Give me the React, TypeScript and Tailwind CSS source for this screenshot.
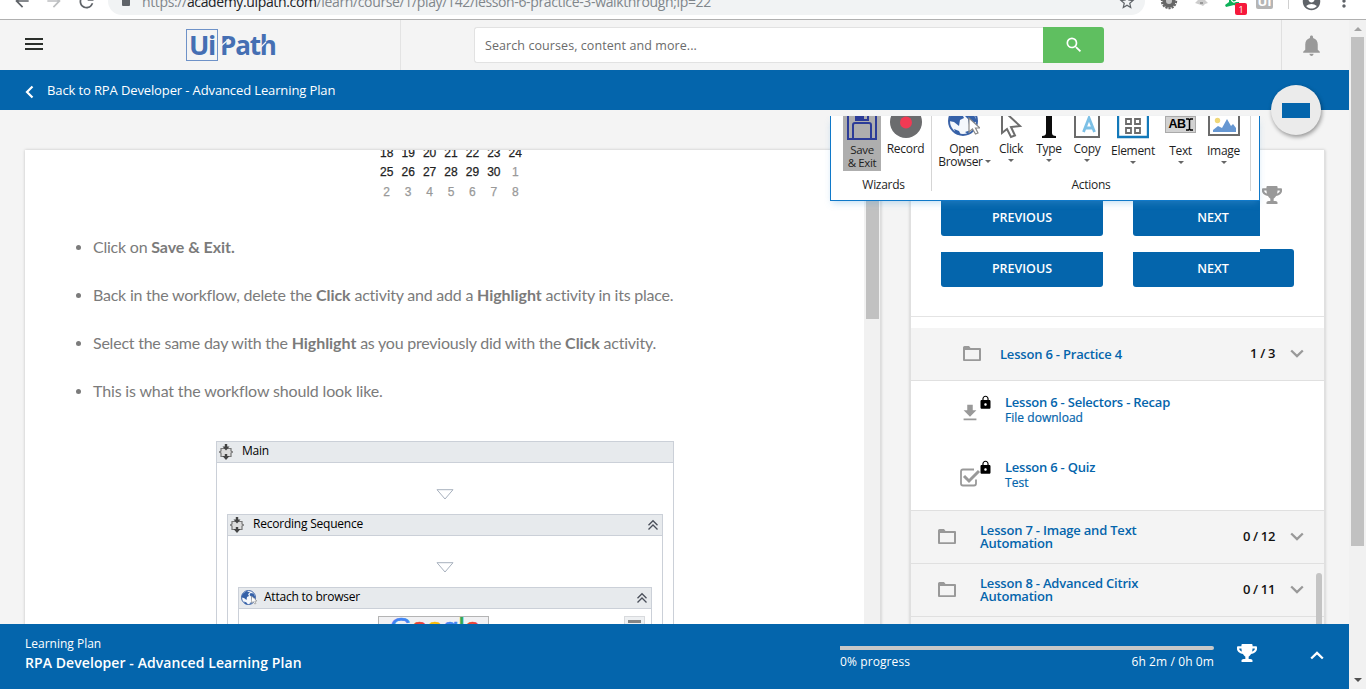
import type { ReactNode } from "react";
import {
  MdArrowBack,
  MdArrowForward,
  MdRefresh,
  MdStarBorder,
  MdAccountCircle,
  MdMoreVert,
  MdNotifications,
  MdSearch,
  MdLock,
  MdFileDownload,
} from "react-icons/md";
import { FaTrophy } from "react-icons/fa";

function BrowserBar() {
  return (
    <div className="h-[20px] shrink-0 overflow-hidden border-b border-[#b0b0b0] bg-white">
      <div className="-mt-[13px] flex h-[28px] items-center">
        <MdArrowBack className="ml-[12px] size-[20px] shrink-0 text-[#5f6368]" />
        <MdArrowForward className="ml-[12px] size-[20px] shrink-0 text-[#bdbfc1]" />
        <MdRefresh className="ml-[12px] size-[21px] shrink-0 text-[#5f6368]" />
        <div className="ml-[11px] flex h-[28px] w-[1037px] shrink-0 items-center rounded-full bg-[#f1f3f4] pl-[14px]">
          <span className="h-[10px] w-[8px] rounded-[1px] bg-[#5f6368]" />
          <span className="mt-[2px] ml-[12px] w-[970px] whitespace-nowrap font-['Open_Sans',sans-serif] text-[14px] leading-[20px] tracking-[-0.36px] text-[#80868b]">
            https://<span className="text-[#202124]">academy.uipath.com</span>
            /learn/course/1/play/142/lesson-6-practice-3-walkthrough;lp=22
          </span>
          <MdStarBorder className="mt-[1px] ml-[6px] size-[18px] shrink-0 text-[#5f6368]" />
        </div>
        <svg viewBox="0 0 18 18" className="ml-[15px] size-[18px] shrink-0">
          <circle cx="9" cy="9" r="7.200" fill="none" stroke="#666" strokeWidth="2" strokeDasharray="2.200 1" />
          <circle cx="9" cy="9" r="4.800" fill="#c4c4c4" stroke="#666" strokeWidth="3.600" />
        </svg>
        <svg viewBox="0 0 13 12" className="ml-[17px] h-[12px] w-[13px] shrink-0">
          <path d="M3 0h7v5l3 3-3 1-2 2-2-1-3-1-3-1 3-3z" fill="#cdcdcd" />
          <path d="M5 7h3v2H5z" fill="#999" />
        </svg>
        <div className="relative ml-[17px] h-[12px] w-[14px] shrink-0">
          <svg viewBox="0 0 14 12" className="size-full">
            <path d="M4 0h7v7h3v5l-5-2-8 2-1-2 4-3z" fill="#0fb15a" />
            <path d="M6 4q2 5 5 2" fill="none" stroke="#fff" strokeWidth="1.200" />
          </svg>
          <span className="absolute top-[8px] left-[10px] flex h-[12px] w-[12px] items-center justify-center rounded-[2px] bg-[#f6193c] font-['Open_Sans',sans-serif] text-[9px] leading-none text-white">
            1
          </span>
        </div>
        <span className="ml-[17px] flex h-[16px] w-[17px] shrink-0 items-center justify-center rounded-[2px] bg-[#b5b5b5] font-['Open_Sans',sans-serif] text-[13px] leading-none font-bold text-white">
          UI
        </span>
        <span className="ml-[15px] h-[16px] w-px shrink-0 bg-[#d0d0d0]" />
        <MdAccountCircle className="ml-[12px] size-[21px] shrink-0 text-[#5f6368]" />
        <MdMoreVert className="ml-[12px] size-[20px] shrink-0 text-[#5f6368]" />
      </div>
    </div>
  );
}

function Logo() {
  return (
    <div className="ml-[143px] flex h-[32px] items-center font-['Open_Sans',sans-serif] text-[26px] leading-none font-bold text-[#456fb3]">
      <span className="flex h-[32px] w-[32px] items-center justify-center border border-[#6e92c8] pb-[1px] text-[27px] tracking-[-1.2px]">
        Ui
      </span>
      <span className="relative ml-[2px] pb-[1px] tracking-[-1.2px]">
        Path
        <svg viewBox="0 0 56 32" className="absolute top-[-3px] left-0 h-[32px] w-[56px]">
          <path d="M1 17l8-7M40 19l6-6" stroke="#f4f4f4" strokeWidth="1.200" fill="none" />
        </svg>
      </span>
    </div>
  );
}

function Header() {
  return (
    <header className="flex h-[50px] shrink-0 bg-[#f4f4f4]">
      <div className="flex w-[401px] items-center border-r border-[#e3e3e3] pl-[25px]">
        <div className="mt-[-2px] flex h-[12px] w-[18px] flex-col justify-between">
          <span className="h-[2px] bg-[#2b2f2b]" />
          <span className="h-[2px] bg-[#2b2f2b]" />
          <span className="h-[2px] bg-[#2b2f2b]" />
        </div>
        <Logo />
      </div>
      <div className="flex flex-1 items-start pt-[7px] pl-[73px]">
        <div className="flex h-[36px] w-[569px] items-center rounded-l-[3px] border border-r-0 border-[#e2e2e2] bg-white pt-[2px] pl-[10px] font-['Open_Sans',sans-serif] text-[12.5px] tracking-[0.08px] text-[#6b6b6b]">
          Search courses, content and more...
        </div>
        <button className="flex h-[36px] w-[61px] items-center justify-center rounded-r-[3px] bg-[#5fbf60] text-white">
          <MdSearch className="mt-[-1px] size-[20px]" />
        </button>
      </div>
      <div className="flex w-[68px] items-center justify-center border-l border-[#e0e0e0] pr-[8px]">
        <MdNotifications className="size-[25px] text-[#999]" />
      </div>
    </header>
  );
}

function Caret() {
  return <span className="inline-block border-x-[3px] border-t-[3px] border-x-transparent border-t-[#666]" />;
}

function Tool({ label, icon, className, low }: { label: string; icon: ReactNode; className: string; low?: boolean }) {
  return (
    <div className={"flex shrink-0 flex-col items-center " + className}>
      <div className="flex h-[24px] items-start">{icon}</div>
      <span className={low ? "mt-[4px]" : "mt-[2px]"}>{label}</span>
      <span className="mt-[4px] flex">
        <Caret />
      </span>
    </div>
  );
}

function Globe({ className }: { className: string }) {
  return (
    <svg viewBox="0 0 32 32" className={className}>
      <circle cx="15" cy="15" r="14" fill="#f5f8fc" stroke="#3d64a8" strokeWidth="2" />
      <path d="M3 8l8-6 7 3-4 3 2 4-4 2-1 6-5-4-5-1zM19 6l6 1 4 8-3 2-1 5-4-3-1-6-3-3zM6 23l5 2 2 4-5-1zM17 26l6-2-3 4z" fill="#3561a8" />
      <path d="M21 12v14l3.500-3 3 5 2.500-1-2.500-5h4.500z" fill="#fff" stroke="#888" strokeWidth="1.200" />
    </svg>
  );
}

function Ribbon() {
  return (
    <div className="absolute top-[116px] left-[830px] z-10 flex h-[85px] w-[430px] flex-col border-x border-b border-[#1079c9] bg-white font-['Open_Sans',sans-serif] text-[12px] leading-[13px] text-[#1e1e1e] shadow-[0_4px_7px_-2px_rgba(80,160,220,0.35)]">
      <div className="flex h-[75px]">
        <div className="flex w-[101px] flex-col border-r border-[#d5d5d5]">
          <div className="flex h-[55px]">
            <div className="ml-[12px] flex w-[38px] shrink-0 flex-col items-center bg-[#aeaeae] text-[11.5px] tracking-[-0.35px]">
              <svg viewBox="0 0 30 24" className="h-[24px] w-[30px] shrink-0">
                <path d="M1 0v23h28V0M6 23V9q0-2 2-2h14q2 0 2 2v14" fill="none" stroke="#2c3c98" strokeWidth="2" />
                <path d="M8 0h14v5H8z" fill="#2c3c98" />
                <path d="M17 0h3v3h-3z" fill="#aeaeae" />
              </svg>
              <span className="mt-[3px]">Save</span>
              <span>&amp; Exit</span>
            </div>
            <div className="flex flex-1 flex-col items-center pr-px">
              <svg viewBox="0 0 32 24" className="h-[24px] w-[32px]">
                <circle cx="16" cy="6" r="16" fill="#6b6c6e" />
                <circle cx="16" cy="6.500" r="6" fill="#f13a54" />
              </svg>
              <span className="mt-[2px] tracking-[-0.3px]">Record</span>
            </div>
          </div>
          <div className="mt-[7px] pl-[5px] text-center tracking-[-0.3px]">Wizards</div>
        </div>
        <div className="flex w-[319px] flex-col border-r border-[#d5d5d5] tracking-[-0.3px]">
          <div className="flex h-[55px]">
            <div className="ml-[5px] flex w-[54px] shrink-0 flex-col items-center">
              <div className="h-[24px] overflow-hidden">
                <Globe className="mt-[-10px] size-[32px]" />
              </div>
              <span className="mt-[2px]">Open</span>
              <span className="flex items-center gap-[2px] pl-px whitespace-nowrap">
                Browser
                <Caret />
              </span>
            </div>
            <Tool
              className="w-[40px]"
              label="Click"
              icon={
                <svg viewBox="0 0 24 24" className="h-[24px] w-[24px]">
                  <path d="M3-5v22l5-4 4 8 4-1.500-4-8.500 9-1L7-3" fill="#fff" stroke="#6d6d6d" strokeWidth="2" />
                </svg>
              }
            />
            <Tool
              className="w-[36px]"
              label="Type"
              icon={
                <svg viewBox="0 0 16 24" className="h-[24px] w-[16px]">
                  <path d="M5 0h6v17q0 3 4 3v2H1v-2q4 0 4-3z" fill="#0c0c0c" />
                </svg>
              }
            />
            <Tool
              className="w-[40px]"
              label="Copy"
              icon={
                <svg viewBox="0 0 26 24" className="h-[24px] w-[26px]">
                  <path d="M1 0v21h24V0" fill="#fff" stroke="#6b6b6b" strokeWidth="2" />
                  <path d="M9.500 16L15 2l5.500 14M11 12h8" fill="none" stroke="#7cc0e6" strokeWidth="2.800" />
                </svg>
              }
            />
            <Tool
              className="w-[52px]"
              low
              label="Element"
              icon={
                <svg viewBox="0 0 32 24" className="h-[24px] w-[32px]">
                  <path d="M1 0v21h30V0" fill="#fff" stroke="#1278b9" strokeWidth="2.400" />
                  <path d="M9 3h5v5H9zM18 3h5v5h-5zM9 12h5v5H9zM18 12h5v5h-5z" fill="none" stroke="#6b6b6b" strokeWidth="1.800" />
                </svg>
              }
            />
            <Tool
              className="w-[43px]"
              low
              label="Text"
              icon={
                <span className="flex h-[17px] w-[31px] items-center justify-center border border-[#aaa] bg-[#d2d2d2] font-['Liberation_Sans',sans-serif] text-[12.5px] font-bold tracking-[-0.5px] text-black">
                  AB
                  <svg viewBox="0 0 7 13" className="h-[13px] w-[7px]">
                    <path d="M0 1h2.500L3.500 2l1-1H7M3.500 2v9M0 12h2.500l1-1 1 1H7" fill="none" stroke="#000" strokeWidth="1.500" />
                  </svg>
                </span>
              }
            />
            <Tool
              className="w-[43px]"
              low
              label="Image"
              icon={
                <svg viewBox="0 0 32 24" className="h-[24px] w-[32px]">
                  <path d="M1 0v19h30V0" fill="#fff" stroke="#6b6b6b" strokeWidth="2" />
                  <circle cx="9.500" cy="4.500" r="2.700" fill="#f0d878" />
                  <path d="M5 16v-2l5-4 4 2 5-9 4 7 2-2 3 4v4z" fill="#6697d2" />
                </svg>
              }
            />
          </div>
          <div className="mt-[7px] text-center tracking-[-0.3px]">Actions</div>
        </div>
      </div>
    </div>
  );
}

function SequenceIcon() {
  return (
    <svg viewBox="0 0 14 16" className="h-[16px] w-[14px] shrink-0">
      <path d="M4 4.500H2v2.500L0.500 8 2 9v3.500h10V9l1.500-1L12 7V4.500z" fill="#dcdcdc" stroke="#777" strokeWidth="1.200" />
      <path d="M7 0v4M7 10v3" stroke="#444" strokeWidth="2.400" />
      <path d="M3.500 2.500h7L7 6.500zM3.500 12h7L7 16z" fill="#444" />
    </svg>
  );
}

function FlowHeader({ title, icon, collapsible }: { title: string; icon: ReactNode; collapsible?: boolean }) {
  return (
    <div className="flex h-[21px] items-center border-b border-[#cbd0d8] bg-[#e7eaed] pr-[3px] pl-[2px] font-['Open_Sans',sans-serif] text-[12px] leading-none tracking-[-0.22px] text-black">
      <span className="flex w-[23px]">{icon}</span>
      <span className="flex-1 pb-[2px]">{title}</span>
      {collapsible && (
        <svg viewBox="0 0 12 12" className="h-[12px] w-[12px]">
          <path d="M1.500 6.200L6 1.700l4.500 4.500M1.500 10.500L6 6l4.500 4.500" fill="none" stroke="#4a4f5a" strokeWidth="1.300" />
        </svg>
      )}
    </div>
  );
}

function FlowArrow() {
  return (
    <div className="flex h-[51px] justify-center pt-[26px]">
      <svg viewBox="0 0 18 11" className="h-[11px] w-[18px]">
        <path d="M1 .7h16L9 10z" fill="#fff" stroke="#a7b0bd" strokeWidth="1" />
      </svg>
    </div>
  );
}

function Workflow() {
  return (
    <div className="mt-[26px] ml-[191px] h-[300px] w-[458px] shrink-0 border border-[#cbd0d8]">
      <FlowHeader title="Main" icon={<SequenceIcon />} />
      <FlowArrow />
      <div className="mx-[10px] h-[300px] border border-[#cbd0d8]">
        <FlowHeader title="Recording Sequence" icon={<SequenceIcon />} collapsible />
        <FlowArrow />
        <div className="mx-[10px] h-[200px] border border-[#cbd0d8]">
          <FlowHeader title="Attach to browser" icon={<Globe className="size-[16px]" />} collapsible />
          <div className="flex pt-[7px] pl-[139px]">
            <div className="h-[40px] w-[111px] overflow-hidden border border-[#b4b4b4] bg-[#f1f1f3] pl-[11px] font-['Liberation_Sans',sans-serif] text-[28px] leading-[30px] [-webkit-text-stroke:0.6px]">
              <div className="mt-[-4px]">
                <span className="text-[#4285f4]">G</span>
                <span className="text-[#ea4335]">o</span>
                <span className="text-[#fbbc05]">o</span>
                <span className="text-[#4285f4]">g</span>
                <span className="text-[#34a853]">l</span>
                <span className="text-[#ea4335]">e</span>
              </div>
            </div>
            <div className="ml-[135px] h-[20px] w-[21px] border border-[#d8dadd] bg-[#eef0f2] px-[3px] pt-[3px]">
              <div className="h-[3px] bg-[#858585]" />
            </div>
          </div>
        </div>
      </div>
    </div>
  );
}

const week1 = ["18", "19", "20", "21", "22", "23", "24"];
const week2 = ["25", "26", "27", "28", "29", "30"];
const week3 = ["2", "3", "4", "5", "6", "7", "8"];

function Week({ children }: { children: ReactNode }) {
  return <div className="grid h-[19.5px] grid-cols-7 place-items-center">{children}</div>;
}

function Calendar() {
  return (
    <div className="mt-[-7px] ml-[351px] h-[59px] w-[150px] shrink-0 font-['Liberation_Sans',sans-serif] text-[12px] leading-none text-[#222] [-webkit-text-stroke:0.25px]">
      <Week>{week1.map((d) => <span key={d}>{d}</span>)}</Week>
      <Week>
        {week2.map((d) => <span key={d}>{d}</span>)}
        <span className="text-[#999]">1</span>
      </Week>
      <Week>{week3.map((d) => <span key={d} className="text-[#999]">{d}</span>)}</Week>
    </div>
  );
}

function Bullet({ children }: { children: ReactNode }) {
  return (
    <li className="flex h-[48px] items-center whitespace-nowrap">
      <span className="mt-px mr-[12px] ml-px size-[5px] rounded-full bg-[#7b7b7b]" />
      <span>{children}</span>
    </li>
  );
}

function Strong({ children }: { children: ReactNode }) {
  return <b className="tracking-[-0.05px]">{children}</b>;
}

function Lesson() {
  return (
    <section className="flex h-[480px] w-[856px] bg-white shadow-[0_0_3px_rgba(0,0,0,0.2)]">
      <div className="flex h-full flex-1 flex-col overflow-hidden">
        <Calendar />
        <ul className="mt-[21px] ml-[50px] shrink-0 font-['Lato',sans-serif] text-[16px] tracking-[-0.23px] text-[#7b7b7b]">
          <Bullet>
            Click on <Strong>Save &amp; Exit.</Strong>
          </Bullet>
          <Bullet>
            Back in the workflow, delete the <Strong>Click</Strong> activity and add a <Strong>Highlight</Strong> activity in its place.
          </Bullet>
          <Bullet>
            Select the same day with the <Strong>Highlight</Strong> as you previously did with the <Strong>Click</Strong> activity.
          </Bullet>
          <Bullet>
            <span className="tracking-[-0.15px]">This is what the workflow should look like.</span>
          </Bullet>
        </ul>
        <Workflow />
      </div>
      <div className="w-[17px] border-r border-[#ddd] bg-[#f1f1f1] pr-px pl-[2px]">
        <div className="h-[169px] bg-[#c1c1c1]" />
      </div>
    </section>
  );
}

function Folder() {
  return (
    <svg viewBox="0 0 18 15" className="mt-[-1px] h-[15px] w-[18px] shrink-0">
      <path d="M0 1.500Q0 0 1.500 0H6l1.500 2H17q1 0 1 1v11q0 1-1 1H1q-1 0-1-1zM2 4v9.200h14V4z" fill="#999" fillRule="evenodd" />
    </svg>
  );
}

function Chevron({ up, className }: { up?: boolean; className: string }) {
  return (
    <svg viewBox="0 0 14 9" className={"h-[9px] w-[14px] shrink-0 " + className}>
      <path d={up ? "M1.200 7.500L7 1.900l5.800 5.600" : "M1.200 1.500L7 7.100l5.800-5.600"} fill="none" stroke="currentColor" strokeWidth="2.300" />
    </svg>
  );
}

function FolderRow({ title, count, nested }: { title: ReactNode; count: string; nested?: boolean }) {
  return (
    <div
      className={
        "flex h-[53px] shrink-0 items-center border-b border-[#e0e0e0] bg-[#f4f4f4] " +
        (nested ? "pl-[52px]" : "pl-[27px]")
      }
    >
      <Folder />
      <span
        className={
          "flex-1 leading-[13px] font-semibold tracking-[-0.2px] text-[#0465ac] " + (nested ? "ml-[19px]" : "ml-[24px]")
        }
      >
        {title}
      </span>
      <span className="font-semibold tracking-[-0.35px] text-[#111]">{count}</span>
      <Chevron className="mt-[-1px] mr-[20px] ml-[15px] text-[#999]" />
    </div>
  );
}

function ItemRow({ title, kind, icon }: { title: string; kind: string; icon: ReactNode }) {
  return (
    <div className="flex h-[65px] shrink-0 pt-[13px] pl-[48px] text-[#0465ac]">
      <div className="relative mt-[7px] size-[24px]">
        {icon}
        <MdLock className="absolute top-[-6px] left-[18.5px] size-[15px] text-black" />
      </div>
      <div className="ml-[22px]">
        <div className="leading-[17px] font-semibold tracking-[-0.22px]">{title}</div>
        <div className="text-[12px] leading-[14px] font-medium tracking-[0.03px] [-webkit-text-stroke:0.2px]">{kind}</div>
      </div>
    </div>
  );
}

function Button({ children, className }: { children: ReactNode; className: string }) {
  return (
    <button className={"flex h-[35px] items-center justify-center bg-[#0465ac] text-[12.5px] font-semibold text-white " + className}>
      {children}
    </button>
  );
}

function Sidebar() {
  return (
    <aside className="relative ml-[29px] flex h-[480px] w-[415px] flex-col overflow-hidden border-x border-[#e0e0e0] bg-white font-['Open_Sans',sans-serif] text-[13px] shadow-[0_0_3px_rgba(0,0,0,0.2)]">
      <div className="flex h-[51px] shrink-0 justify-end pt-[35px] pr-[42px]">
        <FaTrophy className="size-[20px] text-[#999]" />
      </div>
      <div className="flex pl-[30px]">
        <Button className="w-[162px] rounded-b-[3px]">PREVIOUS</Button>
        <Button className="ml-[30px] w-[127px] rounded-bl-[3px] pl-[33px]">NEXT</Button>
      </div>
      <div className="mt-[13px] flex items-end border-b border-[#e4e4e4] pb-[29px] pl-[30px]">
        <Button className="w-[162px] rounded-b-[3px]">PREVIOUS</Button>
        <Button className="ml-[30px] w-[127px] rounded-bl-[3px] pl-[33px]">NEXT</Button>
        <span className="h-[38px] w-[34px] rounded-r-[3px] bg-[#0465ac]" />
      </div>
      <div className="h-[11px] shrink-0" />
      <FolderRow title="Lesson 6 - Practice 4" count="1 / 3" nested />
      <ItemRow
        title="Lesson 6 - Selectors - Recap"
        kind="File download"
        icon={<MdFileDownload className="mt-[1px] size-[22px] text-[#999]" />}
      />
      <ItemRow
        title="Lesson 6 - Quiz"
        kind="Test"
        icon={
          <svg viewBox="0 0 22 20" className="mt-[2px] h-[20px] w-[22px]">
            <path d="M15 1.500H4Q2 1.500 2 3.500v12q0 2 2 2h11q2 0 2-2v-4" fill="none" stroke="#999" strokeWidth="1.800" />
            <path d="M5 8l5 5L20 3" fill="none" stroke="#999" strokeWidth="3" />
          </svg>
        }
      />
      <div className="-mt-px shrink-0 border-t border-[#e0e0e0]">
        <FolderRow title={<>Lesson 7 - Image and Text<br />Automation</>} count="0 / 12" />
        <FolderRow title={<>Lesson 8 - Advanced Citrix<br />Automation</>} count="0 / 11" />
        <div className="h-[20px] bg-[#f4f4f4]" />
      </div>
      <span className="absolute top-[423px] right-[2px] h-[60px] w-[6px] rounded-full bg-[#c4c4c4]" />
    </aside>
  );
}

function Footer() {
  return (
    <footer className="flex h-[65px] shrink-0 items-start bg-[#0465ac] font-['Open_Sans',sans-serif] text-white">
      <div className="w-[840px] pt-[12px] pl-[25px]">
        <div className="text-[12px] leading-[15px]">Learning Plan</div>
        <div className="mt-[2px] text-[14px] leading-[20px] font-semibold tracking-[0.08px]">RPA Developer - Advanced Learning Plan</div>
      </div>
      <div className="w-[374px] pt-[22px] text-[12px] leading-[16px] tracking-[0.1px]">
        <div className="h-[4px] rounded-r-full bg-[#c8c8c8]" />
        <div className="mt-[4px] flex justify-between">
          <span>0% progress</span>
          <span>6h 2m / 0h 0m</span>
        </div>
      </div>
      <FaTrophy className="mt-[19px] ml-[23px] size-[20px]" />
      <Chevron up className="mt-[27px] ml-[53px]" />
    </footer>
  );
}

function PageScrollbar() {
  return (
    <div className="flex w-[17px] shrink-0 flex-col items-center bg-[#f1f1f1]">
      <div className="flex h-[17px] items-center">
        <span className="border-x-[4px] border-b-[4px] border-x-transparent border-b-[#a3a3a3]" />
      </div>
      <div className="h-[509px] w-[13px] bg-[#c1c1c1]" />
      <div className="flex flex-1 items-end pb-[7px]">
        <span className="border-x-[4px] border-t-[4px] border-x-transparent border-t-[#505050]" />
      </div>
    </div>
  );
}

export default function App() {
  return (
    <div className="relative flex h-[689px] w-[1366px] flex-col overflow-hidden bg-[#f4f4f4]">
      <BrowserBar />
      <div className="flex h-[669px]">
        <div className="flex w-[1349px] flex-col">
          <Header />
          <div className="flex h-[40px] shrink-0 items-center bg-[#0465ac] pl-[24px] font-['Open_Sans',sans-serif] text-[13px] tracking-[-0.12px] text-white">
            <svg viewBox="0 0 10 14" className="mt-[3px] h-[14px] w-[10px]">
              <path d="M8.500 1.500L3 7l5.500 5.500" fill="none" stroke="#fff" strokeWidth="2.200" />
            </svg>
            <span className="mt-[2px] ml-[13px]">Back to RPA Developer - Advanced Learning Plan</span>
          </div>
          <main className="flex h-[514px] shrink-0 overflow-hidden pt-[40px] pl-[25px]">
            <Lesson />
            <Sidebar />
          </main>
          <Footer />
        </div>
        <PageScrollbar />
      </div>
      <Ribbon />
      <div className="absolute top-[85px] left-[1271px] z-20 flex size-[50px] items-center justify-center rounded-full bg-[#ebebeb] shadow-[1px_2px_4px_rgba(0,0,0,0.4)]">
        <span className="h-[15px] w-[28px] bg-[#0465ac]" />
      </div>
    </div>
  );
}
